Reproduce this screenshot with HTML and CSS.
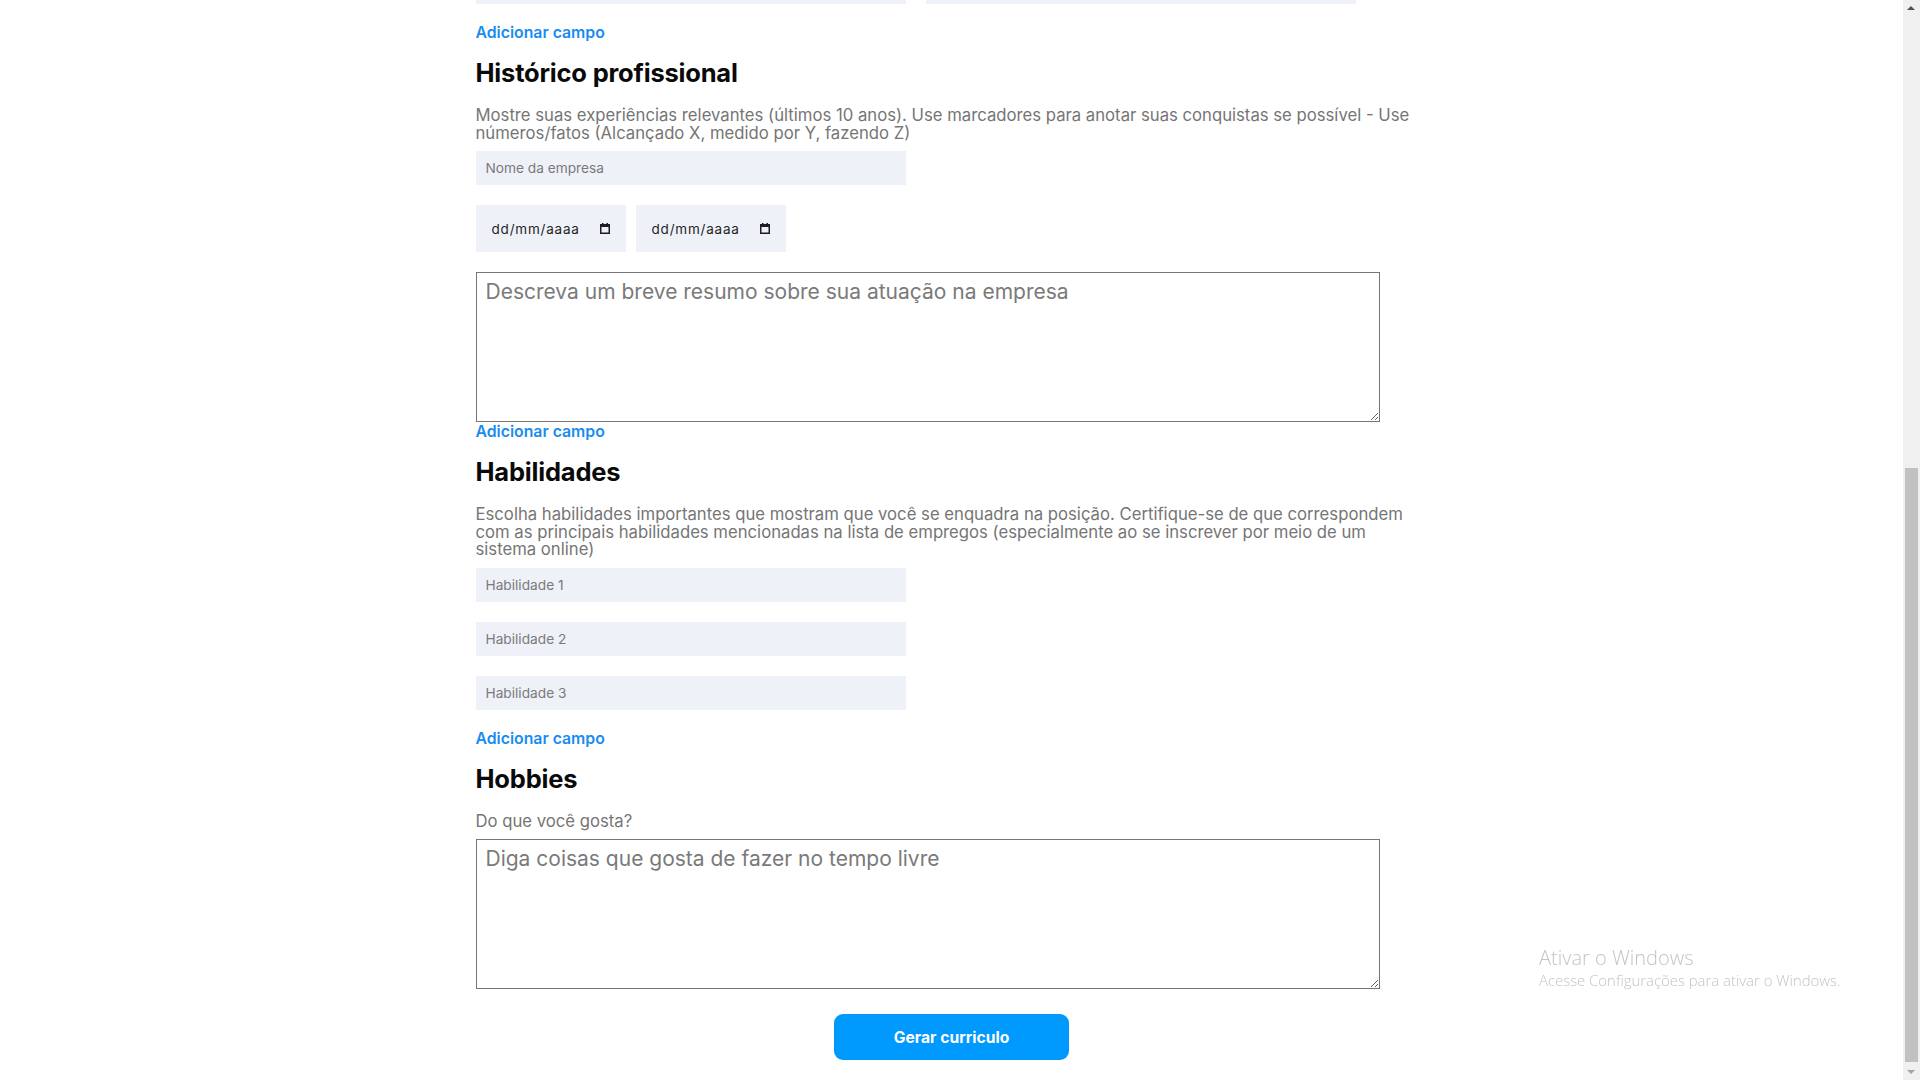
FILE: index.html
```html
<!DOCTYPE html>
<html lang="pt-BR">
<head>
<meta charset="utf-8">
<title>Gerar currículo</title>
<link rel="stylesheet" href="styles.css">
</head>
<body>
<div class="page">
  <form class="form">
    <div class="row">
      <input class="field" type="text">
      <input class="field" type="text">
    </div>
    <a class="add" href="#">Adicionar campo</a>

    <h2 class="title">Histórico profissional</h2>
    <p class="hint">Mostre suas experiências relevantes (últimos 10 anos). Use marcadores para anotar suas conquistas se possível - Use números/fatos (Alcançado X, medido por Y, fazendo Z)</p>
    <input class="field" type="text" placeholder="Nome da empresa">
    <div class="dates">
      <div class="date"><span>dd/mm/aaaa</span><svg class="cal" width="10" height="11" viewBox="0 0 10 11"><rect x="0.75" y="1.75" width="8.5" height="8.5" fill="none" stroke="#1f1f1f" stroke-width="1.5"/><rect x="0" y="1" width="10" height="3" fill="#1f1f1f"/><rect x="2" y="0" width="1.5" height="2" fill="#1f1f1f"/><rect x="6.5" y="0" width="1.5" height="2" fill="#1f1f1f"/></svg></div>
      <div class="date"><span>dd/mm/aaaa</span><svg class="cal" width="10" height="11" viewBox="0 0 10 11"><rect x="0.75" y="1.75" width="8.5" height="8.5" fill="none" stroke="#1f1f1f" stroke-width="1.5"/><rect x="0" y="1" width="10" height="3" fill="#1f1f1f"/><rect x="2" y="0" width="1.5" height="2" fill="#1f1f1f"/><rect x="6.5" y="0" width="1.5" height="2" fill="#1f1f1f"/></svg></div>
    </div>
    <textarea class="area" placeholder="Descreva um breve resumo sobre sua atuação na empresa"></textarea>
    <a class="add add-tight" href="#">Adicionar campo</a>

    <h2 class="title">Habilidades</h2>
    <p class="hint">Escolha habilidades importantes que mostram que você se enquadra na posição. Certifique-se de que correspondem com as principais habilidades mencionadas na lista de empregos (especialmente ao se inscrever por meio de um sistema online)</p>
    <input class="field" type="text" placeholder="Habilidade 1">
    <input class="field" type="text" placeholder="Habilidade 2">
    <input class="field" type="text" placeholder="Habilidade 3">
    <a class="add" href="#">Adicionar campo</a>

    <h2 class="title">Hobbies</h2>
    <p class="hint">Do que você gosta?</p>
    <textarea class="area" placeholder="Diga coisas que gosta de fazer no tempo livre"></textarea>

    <div class="actions">
      <button class="submit" type="button">Gerar curriculo</button>
    </div>
  </form>
</div>

<div class="watermark">
  <div class="wm-title">Ativar o Windows</div>
  <div class="wm-sub">Acesse Configurações para ativar o Windows.</div>
</div>

<div class="scrollbar">
  <div class="sb-arrow sb-up"></div>
  <div class="sb-track"><div class="sb-thumb"></div></div>
  <div class="sb-arrow sb-down"></div>
</div>
</body>
</html>
```
FILE: styles.css
```css
html, body {
  margin: 0;
  padding: 0;
  height: 100%;
  overflow: hidden;
  background: #ffffff;
}

body {
  font-family: Inter, "Noto Sans", sans-serif;
  color: #111;
}

.page {
  width: 1903px;
}

.form {
  width: 952px;
  margin: 0 auto;
  display: flex;
  flex-direction: column;
  align-items: flex-start;
}

.row {
  display: flex;
  gap: 20px;
  margin-top: -30px;
}

.field {
  display: block;
  box-sizing: border-box;
  width: 430px;
  height: 34px;
  margin: 0 0 20px 0;
  padding: 0 10px;
  border: none;
  outline: none;
  background: #eef1f8;
  font-family: Inter, sans-serif;
  font-size: 13.7px;
  color: #333;
}

.field::placeholder {
  color: #7a7a7a;
}

.add {
  display: block;
  height: 20px;
  line-height: 20px;
  font-size: 15.8px;
  font-weight: 600;
  color: #1a8cf0;
  text-decoration: none;
  margin-top: -1px;
}

.add-tight {
  margin-top: 0;
}

.title {
  margin: 14px 0 0 0;
  line-height: 32px;
  font-size: 25.5px;
  font-weight: 700;
  letter-spacing: -0.2px;
  color: #0a0a0a;
}

.hint {
  margin: 18px 0 9px 0;
  font-size: 16.7px;
  line-height: 17.5px;
  color: #757575;
  width: 952px;
}

.dates {
  display: flex;
  gap: 10px;
  margin-bottom: 20px;
}

.date {
  box-sizing: border-box;
  width: 150px;
  height: 47px;
  padding: 0 16px;
  background: #eef1f8;
  display: flex;
  align-items: center;
  justify-content: space-between;
  font-size: 13.5px;
  letter-spacing: 0.8px;
  color: #1f1f1f;
}

.area {
  display: block;
  box-sizing: border-box;
  width: 904px;
  height: 150px;
  margin: 0;
  padding: 6px 9px;
  border: 1px solid #767676;
  font-family: Inter, sans-serif;
  font-size: 21px;
  line-height: 25px;
  resize: both;
}

.area::placeholder {
  color: #7a7a7a;
}

.actions {
  align-self: stretch;
  display: flex;
  justify-content: center;
  margin-top: 25px;
}

.submit {
  width: 235px;
  height: 46px;
  border: none;
  border-radius: 9px;
  background: #0099fe;
  color: #ffffff;
  font-family: Inter, sans-serif;
  font-size: 15.7px;
  font-weight: 700;
}

.watermark {
  position: fixed;
  left: 1539px;
  top: 946px;
  color: #c4c4c4;
  font-family: "Open Sans", sans-serif;
}

.wm-title {
  font-size: 20px;
  font-weight: 300;
  line-height: 24px;
}

.wm-sub {
  font-size: 14.9px;
  font-weight: 300;
  line-height: 20px;
}

.scrollbar {
  position: fixed;
  right: 0;
  top: 0;
  width: 17px;
  height: 1080px;
  background: #f0f0f0;
  display: flex;
  flex-direction: column;
}

.sb-arrow {
  height: 17px;
  position: relative;
}

.sb-up::after,
.sb-down::after {
  content: "";
  position: absolute;
  left: 4px;
  border-left: 4.5px solid transparent;
  border-right: 4.5px solid transparent;
}

.sb-up::after {
  top: 6px;
  border-bottom: 4px solid #505050;
}

.sb-down::after {
  top: 7px;
  border-top: 4px solid #a3a3a3;
}

.sb-track {
  flex: 1;
  padding-top: 451px;
  padding-bottom: 1px;
  box-sizing: border-box;
  display: flex;
}

.sb-thumb {
  flex: 1;
  margin: 0 2px;
  background: #c1c1c1;
}
```
